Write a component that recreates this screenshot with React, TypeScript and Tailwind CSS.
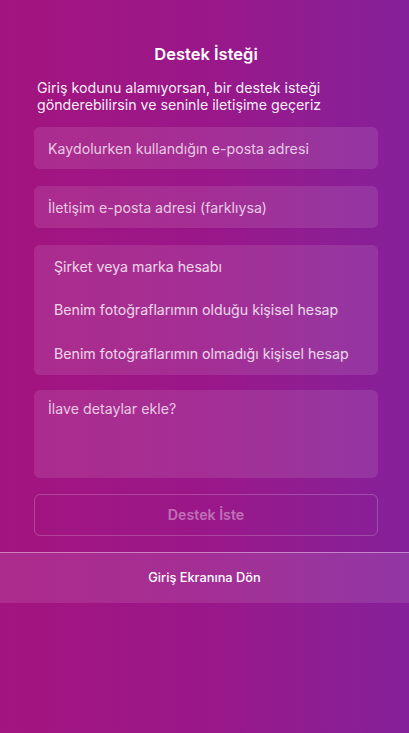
import { useState } from 'react';

const font = { fontFamily: 'Inter, "Noto Sans", sans-serif' };

const accountTypes = [
    'Şirket veya marka hesabı',
    'Benim fotoğraflarımın olduğu kişisel hesap',
    'Benim fotoğraflarımın olmadığı kişisel hesap',
];

export default function App() {
    const [email, setEmail] = useState('');
    const [contact, setContact] = useState('');
    const [details, setDetails] = useState('');
    const [selected, setSelected] = useState<number | null>(null);

    return (
        <div
            className="min-h-[733px] w-full bg-gradient-to-r from-[#a3147f] via-[#9a1789] to-[#85209a] text-white flex flex-col"
            style={font}
        >
            <div className="pl-[34px] pr-[31px] pt-[43px]">
                <h1 className="text-center text-[16.5px] font-semibold leading-[22px]">Destek İsteği</h1>
                <p className="mt-[15px] px-[3px] text-[14.2px] leading-[16.5px] text-white/95">
                    Giriş kodunu alamıyorsan, bir destek isteği gönderebilirsin ve seninle iletişime geçeriz
                </p>

                <input
                    value={email}
                    onChange={e => setEmail(e.target.value)}
                    placeholder="Kaydolurken kullandığın e-posta adresi"
                    className="mt-[14px] block w-full h-[42px] rounded-md bg-white/10 px-[14px] text-[14.2px] text-white placeholder:text-white/75 outline-none"
                />
                <input
                    value={contact}
                    onChange={e => setContact(e.target.value)}
                    placeholder="İletişim e-posta adresi (farklıysa)"
                    className="mt-[17px] block w-full h-[42px] rounded-md bg-white/10 px-[14px] text-[14.2px] text-white placeholder:text-white/75 outline-none"
                />

                <div className="mt-[17px] rounded-md bg-white/10 h-[130px] flex flex-col justify-center">
                    {accountTypes.map((label, i) => (
                        <button
                            key={label}
                            onClick={() => setSelected(i)}
                            className={`h-[43.5px] px-[20px] whitespace-nowrap text-left text-[14.2px] ${selected === i ? 'text-white' : 'text-white/80'}`}
                        >
                            {label}
                        </button>
                    ))}
                </div>

                <textarea
                    value={details}
                    onChange={e => setDetails(e.target.value)}
                    placeholder="İlave detaylar ekle?"
                    className="mt-[15px] block w-full h-[88px] resize-none rounded-md bg-white/10 px-[14px] pt-[10px] text-[14.2px] leading-[18px] text-white placeholder:text-white/75 outline-none"
                />

                <button className="mt-[16px] w-full h-[42px] rounded-md border border-white/20 text-[14.2px] font-semibold text-white/40">
                    Destek İste
                </button>
            </div>

            <div className="mt-[16px] border-t border-white/40 bg-white/10 h-[51px] flex items-center justify-center">
                <button className="text-[12.8px] font-medium text-white">Giriş Ekranına Dön</button>
            </div>
        </div>
    );
}
